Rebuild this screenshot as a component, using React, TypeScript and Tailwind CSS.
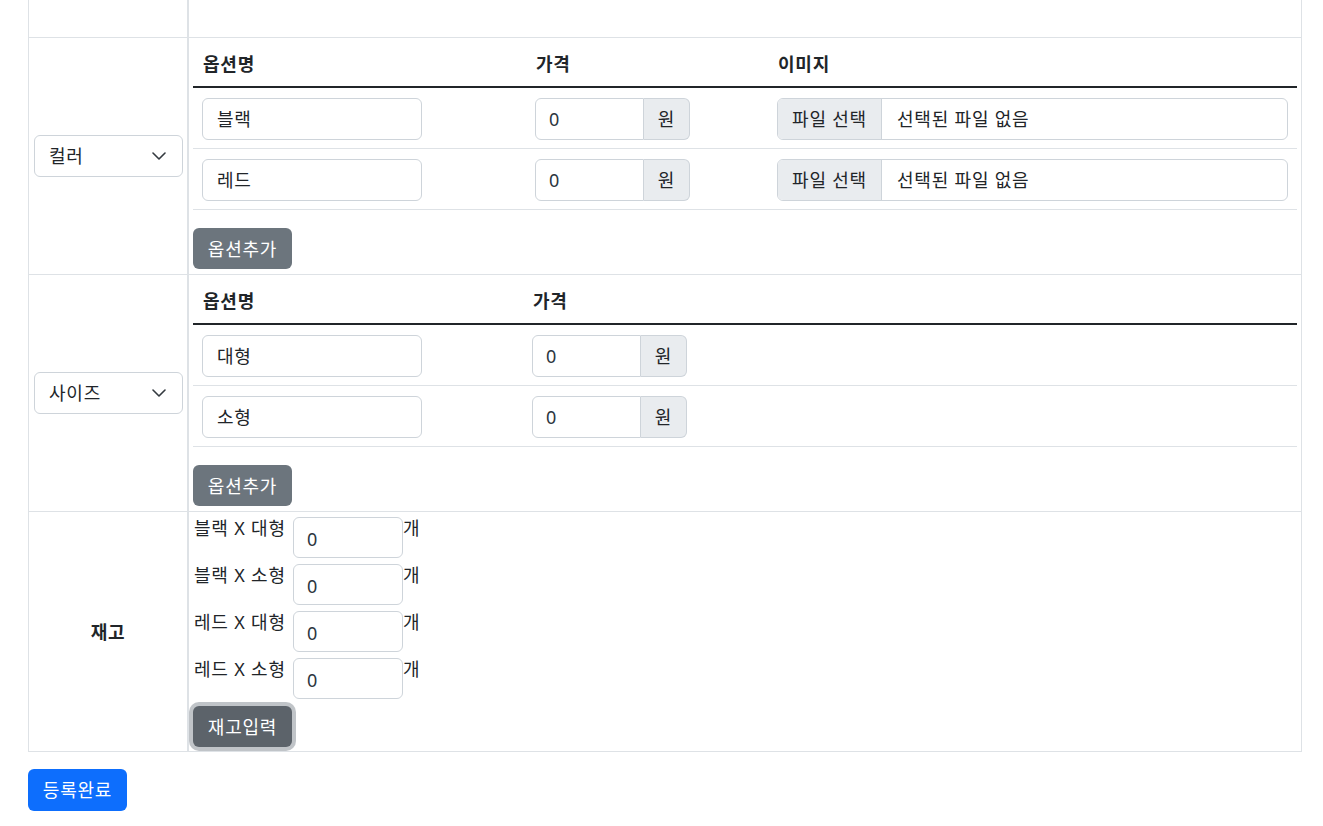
import React from 'react';

const font = { fontFamily: '"Noto Sans", "Noto Sans CJK KR", sans-serif' };

function Chevron() {
  return (
    <svg width="14" height="8" viewBox="0 0 14 8" fill="none" className="shrink-0">
      <path d="M1 1l6 6 6-6" stroke="#343a40" strokeWidth="1.6" strokeLinecap="round" strokeLinejoin="round" />
    </svg>
  );
}

function SelectBox({ label }: { label: string }) {
  return (
    <div className="flex h-[42px] w-[149px] items-center justify-between rounded-[6px] border border-[#ced4da] bg-white pl-[14px] pr-[16px]">
      <span>{label}</span>
      <Chevron />
    </div>
  );
}

function TextBox({ value, className = '' }: { value: string; className?: string }) {
  return (
    <div className={`flex h-[42px] items-center rounded-[6px] border border-[#ced4da] bg-white px-[14px] ${className}`}>
      {value}
    </div>
  );
}

function PriceGroup() {
  return (
    <div className="flex h-[42px] w-[155px]">
      <div className="flex flex-1 items-center rounded-l-[6px] border border-[#ced4da] bg-white pl-[13px] text-[#2b3640]">0</div>
      <div className="flex w-[46px] items-center justify-center rounded-r-[6px] border border-l-0 border-[#ced4da] bg-[#e9ecef]">
        원
      </div>
    </div>
  );
}

function FileBox() {
  return (
    <div className="flex h-[42px] w-full overflow-hidden rounded-[6px] border border-[#ced4da] bg-white">
      <div className="flex w-[104px] items-center justify-center border-r border-[#ced4da] bg-[#e9ecef]">파일 선택</div>
      <div className="flex items-center pl-[15px]">선택된 파일 없음</div>
    </div>
  );
}

function GrayButton({ children, focused = false }: { children: React.ReactNode; focused?: boolean }) {
  return (
    <button
      className={`h-[41px] w-[99px] rounded-[6px] text-white ${
        focused ? 'bg-[#5c636a] shadow-[0_0_0_4px_rgba(130,138,145,0.5)]' : 'bg-[#6c757d]'
      }`}
    >
      {children}
    </button>
  );
}

const colorRows = ['블랙', '레드'];
const sizeRows = ['대형', '소형'];
const stock = ['블랙 X 대형', '블랙 X 소형', '레드 X 대형', '레드 X 소형'];

export default function App() {
  return (
    <div className="min-h-screen bg-white text-[18px] leading-[26px] tracking-[0.8px] text-[#212529]" style={font}>
      <div className="ml-[28px] w-[1274px] border-x border-[#dee2e6]">
        {/* scrolled-off top row */}
        <div className="flex h-[38px] border-b border-[#dee2e6]">
          <div className="w-[160px] border-r-2 border-[#dee2e6]" />
          <div className="flex-1" />
        </div>

        {/* 컬러 */}
        <div className="flex border-b border-[#dee2e6]">
          <div className="flex w-[160px] items-center border-r-2 border-[#dee2e6] pl-[5px]">
            <SelectBox label="컬러" />
          </div>
          <div className="flex-1 pb-[5px] pl-[4px] pr-[4px] pt-[4px]">
            <div className="grid h-[46px] grid-cols-[333px_242px_1fr] items-center border-b-2 border-[#212529] font-bold">
              <div className="pl-[10px]">옵션명</div>
              <div className="pl-[10px]">가격</div>
              <div className="pl-[10px]">이미지</div>
            </div>
            {colorRows.map((r) => (
              <div key={r} className="grid h-[61px] grid-cols-[333px_242px_1fr] items-start border-b border-[#dee2e6] pt-[10px]">
                <div className="px-[9px]">
                  <TextBox value={r} className="w-[220px]" />
                </div>
                <div className="px-[9px]">
                  <PriceGroup />
                </div>
                <div className="px-[9px]">
                  <FileBox />
                </div>
              </div>
            ))}
            <div className="mt-[18px]">
              <GrayButton>옵션추가</GrayButton>
            </div>
          </div>
        </div>

        {/* 사이즈 */}
        <div className="flex border-b border-[#dee2e6]">
          <div className="flex w-[160px] items-center border-r-2 border-[#dee2e6] pl-[5px]">
            <SelectBox label="사이즈" />
          </div>
          <div className="flex-1 pb-[5px] pl-[4px] pr-[4px] pt-[4px]">
            <div className="grid h-[46px] grid-cols-[330px_1fr] items-center border-b-2 border-[#212529] font-bold">
              <div className="pl-[10px]">옵션명</div>
              <div className="pl-[10px]">가격</div>
            </div>
            {sizeRows.map((r) => (
              <div key={r} className="grid h-[61px] grid-cols-[330px_1fr] items-start border-b border-[#dee2e6] pt-[10px]">
                <div className="px-[9px]">
                  <TextBox value={r} className="w-[220px]" />
                </div>
                <div className="px-[9px]">
                  <PriceGroup />
                </div>
              </div>
            ))}
            <div className="mt-[18px]">
              <GrayButton>옵션추가</GrayButton>
            </div>
          </div>
        </div>

        {/* 재고 */}
        <div className="flex border-b border-[#dee2e6]">
          <div className="flex w-[160px] items-center justify-center border-r-2 border-[#dee2e6] font-bold">재고</div>
          <div className="flex flex-1 flex-col pb-[4px] pl-[4px] pt-[5px]">
            <div className="flex flex-col gap-[6px]">
              {stock.map((s) => (
                <div key={s} className="flex items-start">
                  <span className="-mt-[2px] w-[100px] pl-[1px]">{s}</span>
                  <div className="flex h-[41px] w-[110px] items-center rounded-[6px] border border-[#ced4da] bg-white pl-[13px] pt-[2px] text-[#2b3640]">
                    0
                  </div>
                  <span className="-mt-[2px]">개</span>
                </div>
              ))}
            </div>
            <div className="mt-[7px]">
              <GrayButton focused>재고입력</GrayButton>
            </div>
          </div>
        </div>
      </div>

      <div className="ml-[28px] mt-[17px]">
        <button className="h-[42px] w-[99px] rounded-[6px] bg-[#0d6efd] text-white">등록완료</button>
      </div>
    </div>
  );
}
